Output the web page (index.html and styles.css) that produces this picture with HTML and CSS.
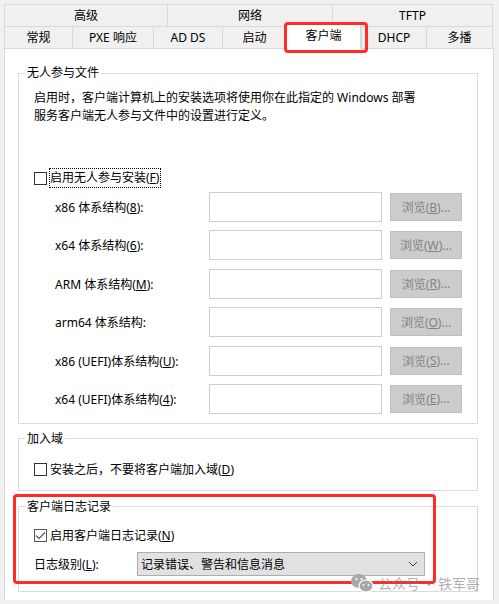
FILE: index.html
```html
<!DOCTYPE html>
<html lang="zh-CN">

<head>
  <meta charset="UTF-8" />
  <meta name="viewport" content="width=device-width, initial-scale=1.0" />
  <title>客户端属性</title>
  <link rel="stylesheet" href="styles.css">
</head>

<body>
  <div class="dialog">
    <div class="tabs">
      <div class="tab-row row-top">
        <div class="tab">高级</div>
        <div class="tab">网络</div>
        <div class="tab tab-last">TFTP</div>
      </div>
      <div class="tab-row row-bottom">
        <div class="tab">常规</div>
        <div class="tab">PXE 响应</div>
        <div class="tab">AD DS</div>
        <div class="tab">启动</div>
        <div class="tab tab-active">客户端</div>
        <div class="tab">DHCP</div>
        <div class="tab tab-last">多播</div>
      </div>
    </div>

    <div class="panel">
      <!-- 无人参与文件 -->
      <fieldset class="group">
        <legend>无人参与文件</legend>
        <div class="group-body unattend">
          <p class="desc">启用时，客户端计算机上的安装选项将使用你在此指定的 Windows 部署<br>服务客户端无人参与文件中的设置进行定义。</p>

          <div class="check-row focus-row">
            <span class="check"></span>
            <span class="check-label focused">启用无人参与安装(<u>F</u>)</span>
          </div>

          <div class="arch-grid">
            <div class="arch-label">x86 体系结构(<u>8</u>):</div>
            <div class="text-box"></div>
            <div class="browse">浏览(<u>B</u>)...</div>

            <div class="arch-label">x64 体系结构(<u>6</u>):</div>
            <div class="text-box"></div>
            <div class="browse">浏览(<u>W</u>)...</div>

            <div class="arch-label">ARM 体系结构(<u>M</u>):</div>
            <div class="text-box"></div>
            <div class="browse">浏览(<u>R</u>)...</div>

            <div class="arch-label">arm64 体系结构:</div>
            <div class="text-box"></div>
            <div class="browse">浏览(<u>O</u>)...</div>

            <div class="arch-label">x86 (UEFI)体系结构(<u>U</u>):</div>
            <div class="text-box"></div>
            <div class="browse">浏览(<u>S</u>)...</div>

            <div class="arch-label">x64 (UEFI)体系结构(<u>4</u>):</div>
            <div class="text-box"></div>
            <div class="browse">浏览(<u>E</u>)...</div>
          </div>
        </div>
      </fieldset>

      <!-- 加入域 -->
      <fieldset class="group group-domain">
        <legend>加入域</legend>
        <div class="group-body domain">
          <div class="check-row">
            <span class="check"></span>
            <span class="check-label">安装之后，不要将客户端加入域(<u>D</u>)</span>
          </div>
        </div>
      </fieldset>

      <!-- 客户端日志记录 -->
      <fieldset class="group group-log">
        <legend>客户端日志记录</legend>
        <div class="group-body logging">
          <div class="check-row">
            <span class="check checked">
              <svg width="11" height="11" viewBox="0 0 11 11">
                <path d="M1 5.5 L4 8.5 L10 2.5" fill="none" stroke="#555" stroke-width="1.2" />
              </svg>
            </span>
            <span class="check-label">启用客户端日志记录(<u>N</u>)</span>
          </div>
          <div class="level-row">
            <span class="level-label">日志级别(<u>L</u>):</span>
            <div class="select">
              <span>记录错误、警告和信息消息</span>
              <svg width="10" height="6" viewBox="0 0 10 6">
                <path d="M1 1 L5 5 L9 1" fill="none" stroke="#444" stroke-width="1" />
              </svg>
            </div>
          </div>
        </div>
      </fieldset>
    </div>

    <!-- annotation marks -->
    <div class="mark mark-tab"></div>
    <div class="mark mark-log"></div>

    <div class="watermark">
      <svg width="22" height="20" viewBox="0 0 22 20">
        <ellipse cx="8" cy="8" rx="8" ry="7" fill="#a8a8a8" />
        <ellipse cx="15" cy="13" rx="7" ry="6" fill="#a8a8a8" stroke="#fff" stroke-width="1.2" />
        <circle cx="5.5" cy="6" r="1.1" fill="#fff" />
        <circle cx="10.5" cy="6" r="1.1" fill="#fff" />
        <circle cx="12.5" cy="12" r="0.9" fill="#fff" />
        <circle cx="17.5" cy="12" r="0.9" fill="#fff" />
      </svg>
      <span class="wm-text">公众号</span>
      <span class="dot">·</span>
      <span>铁军哥</span>
    </div>
  </div>
</body>

</html>
```

FILE: styles.css
```css
* {
  box-sizing: border-box;
}

body {
  margin: 0;
  background-color: #f0f0f0;
  font-family: "Noto Sans", "Noto Sans CJK SC", sans-serif;
  font-size: 12px;
  color: #000;
  overflow: hidden;
}

.dialog {
  position: relative;
  width: 499px;
  height: 604px;
  padding-top: 4px;
  overflow: hidden;
}

/* tabs */
.tabs {
  margin-left: 4px;
}

.tab-row {
  display: grid;
  grid-auto-rows: 22px;
}

.row-top {
  grid-template-columns: 163px 165px 161px;
}

.row-bottom {
  grid-template-columns: 68px 81px 69px 64px 75px 65px 67px;
}

.tab {
  display: flex;
  align-items: center;
  justify-content: center;
  border-top: 1px solid #d9d9d9;
  border-left: 1px solid #d9d9d9;
  background-color: #f0f0f0;
  line-height: 18px;
}

.tab-last {
  border-right: 1px solid #d9d9d9;
}

.tab-active {
  position: relative;
  z-index: 1;
  height: 25px;
  margin-top: -2px;
  padding-bottom: 2px;
  background-color: #fff;
  border-right: 1px solid #d9d9d9;
}

/* panel */
.panel {
  margin-left: 4px;
  width: 490px;
  height: 552px;
  padding: 15px 15px 0 13px;
  background-color: #fff;
  border: 1px solid #d9d9d9;
  border-bottom: none;
}

.group {
  margin: 0;
  padding: 0;
  min-width: 0;
  border: 1px solid #dcdcdc;
}

.group legend {
  margin-left: 6px;
  padding: 0 2px;
  line-height: 18px;
}

.group-domain {
  margin-top: 6px;
}

.group-log {
  margin-top: 7px;
}

.group-body {
  padding-left: 15px;
}

.unattend {
  padding-top: 7px;
  padding-bottom: 9px;
}

.domain {
  padding-top: 12px;
  padding-bottom: 10px;
}

.logging {
  padding-top: 10px;
  padding-bottom: 15px;
}

.desc {
  margin: 0;
  line-height: 18px;
}

/* checkboxes */
.check-row {
  display: flex;
  align-items: center;
  gap: 2px;
  height: 20px;
}

.focus-row {
  margin-top: 43px;
}

.check {
  display: flex;
  align-items: center;
  justify-content: center;
  width: 13px;
  height: 13px;
  border: 1px solid #333;
  background-color: #fff;
}

.checked {
  border-color: #555;
}

.check-label {
  border: 1px dotted transparent;
  padding: 0 1px 0 0;
  line-height: 18px;
}

.check-label.focused {
  border-color: #000;
}

/* architecture rows */
.arch-grid {
  display: grid;
  grid-template-columns: 146px 173px 72px;
  grid-auto-rows: 30px;
  column-gap: 8px;
  row-gap: 8.4px;
  align-items: center;
  margin-top: 4px;
  padding-left: 21px;
}

.text-box {
  height: 30px;
  border: 1px solid #cfcfcf;
  background-color: #fff;
}

.browse {
  display: flex;
  align-items: center;
  justify-content: center;
  height: 28px;
  background-color: #cccccc;
  border: 1px solid #bfbfbf;
  color: #838383;
}

/* logging level */
.level-row {
  display: flex;
  align-items: center;
  margin-top: 6px;
}

.level-label {
  width: 103px;
}

.select {
  display: flex;
  align-items: center;
  justify-content: space-between;
  width: 288px;
  height: 24px;
  padding: 0 6px 0 3px;
  background-color: #e1e1e1;
  border: 1px solid #adadad;
}

/* red annotation boxes */
.mark {
  position: absolute;
  border: 3px solid #ff2b2b;
  border-radius: 4px;
  z-index: 2;
}

.mark-tab {
  left: 284px;
  top: 22px;
  width: 84px;
  height: 31px;
}

.mark-log {
  left: 13px;
  top: 494px;
  width: 423px;
  height: 90px;
}

/* watermark */
.watermark {
  position: absolute;
  left: 351px;
  top: 573px;
  z-index: 3;
  display: flex;
  align-items: center;
  font-family: "Noto Sans CJK SC", sans-serif;
  font-size: 14px;
  line-height: 20px;
  color: rgba(120, 120, 120, 0.6);
}

.watermark .wm-text {
  margin-left: 5px;
}

.watermark .dot {
  margin: 0 2px;
}
```
